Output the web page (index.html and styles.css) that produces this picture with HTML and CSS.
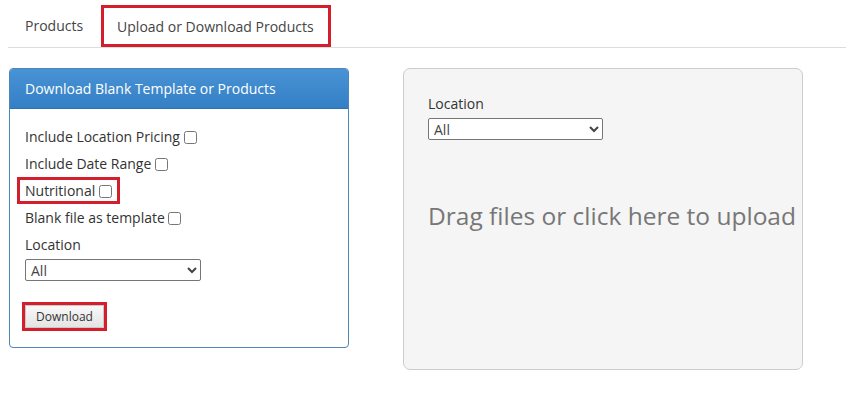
FILE: index.html
```html
<!DOCTYPE html>
<html lang="en">
<head>
    <meta charset="UTF-8">
    <title>Upload or Download Products</title>
    <link rel="stylesheet" href="styles.css">
</head>
<body>
    <div class="tabs">
        <a class="tab">Products</a>
        <a class="tab tab-active">Upload or Download Products</a>
    </div>

    <div class="content">
        <div class="panel">
            <div class="panel-heading">Download Blank Template or Products</div>
            <div class="panel-body">
                <div class="row"><label>Include Location Pricing <input type="checkbox"></label></div>
                <div class="row"><label>Include Date Range <input type="checkbox"></label></div>
                <div class="row"><label class="mark">Nutritional <input type="checkbox"></label></div>
                <div class="row"><label>Blank file as template <input type="checkbox"></label></div>
                <div class="row"><label>Location</label></div>
                <select class="select">
                    <option>All</option>
                </select>
                <div class="actions">
                    <button class="btn">Download</button>
                </div>
            </div>
        </div>

        <div class="dropzone">
            <div class="row"><label>Location</label></div>
            <select class="select">
                <option>All</option>
            </select>
            <div class="drop-text">Drag files or click here to upload</div>
        </div>
    </div>
</body>
</html>
```

FILE: styles.css
```css
:root{
    --cor_texto : #333;
    --cor_marca : #d21f2b;
    --cor_azul : #3a86c8;
}

body {
    font-family: "Open Sans", Arial, sans-serif;
    font-size: 14px;
    color: var(--cor_texto);
    background-color: #fff;
    margin: 0;
    padding: 4px 0 0 8px;
}

.tabs {
    display: flex;
    border-bottom: 1px solid #ddd;
    padding-top: 1px;
}

.tab {
    display: block;
    height: 42px;
    line-height: 42px;
    padding: 0 18px 0 17px;
    box-sizing: border-box;
    color: #444;
}

.tab-active {
    border: 3px solid var(--cor_marca);
    padding: 0 14px 0 13px;
    line-height: 37px;
}

.content {
    display: flex;
    gap: 54px;
    margin: 20px 0 0 1px;
}

.panel {
    width: 340px;
    height: 280px;
    box-sizing: border-box;
    border: 1px solid #4f86b5;
    border-radius: 4px;
    overflow: hidden;
    align-self: flex-start;
}

.panel-heading {
    height: 39px;
    line-height: 39px;
    padding: 0 15px;
    color: #fff;
    background: linear-gradient(#4793d6, #3580c4);
    border-bottom: 1px solid #2f73b0;
}

.panel-body {
    padding: 14px 15px;
}

.row {
    height: 27px;
    line-height: 27px;
}

.row input[type="checkbox"] {
    width: 13px;
    height: 13px;
    margin: 0;
    vertical-align: -2px;
}

.mark {
    display: inline-block;
    border: 3px solid var(--cor_marca);
    line-height: 21px;
    padding: 0 5px;
    margin-left: -8px;
}

.select {
    display: block;
    width: 176px;
    height: 22px;
    font-family: inherit;
    font-size: 14px;
    color: #444;
    border: 1px solid #767676;
    border-radius: 2px;
    background-color: #fff;
    padding: 0 1px;
    margin-top: 1px;
}

.actions {
    margin-top: 24px;
}

.btn {
    width: 79px;
    height: 23px;
    font-family: inherit;
    font-size: 12px;
    color: #333;
    border: 1px solid #c8c8c8;
    border-radius: 0;
    background: linear-gradient(#f8f8f8, #e4e4e4);
    box-shadow: 0 0 0 3px var(--cor_marca);
    padding: 0;
}

.dropzone {
    width: 400px;
    height: 302px;
    box-sizing: border-box;
    background-color: #f5f5f5;
    border: 1px solid #ccc;
    border-radius: 7px;
    padding: 21px 24px;
}

.dropzone .select {
    width: 175px;
}

.drop-text {
    margin-top: 59px;
    font-size: 24.5px;
    color: #777;
    white-space: nowrap;
}
```
